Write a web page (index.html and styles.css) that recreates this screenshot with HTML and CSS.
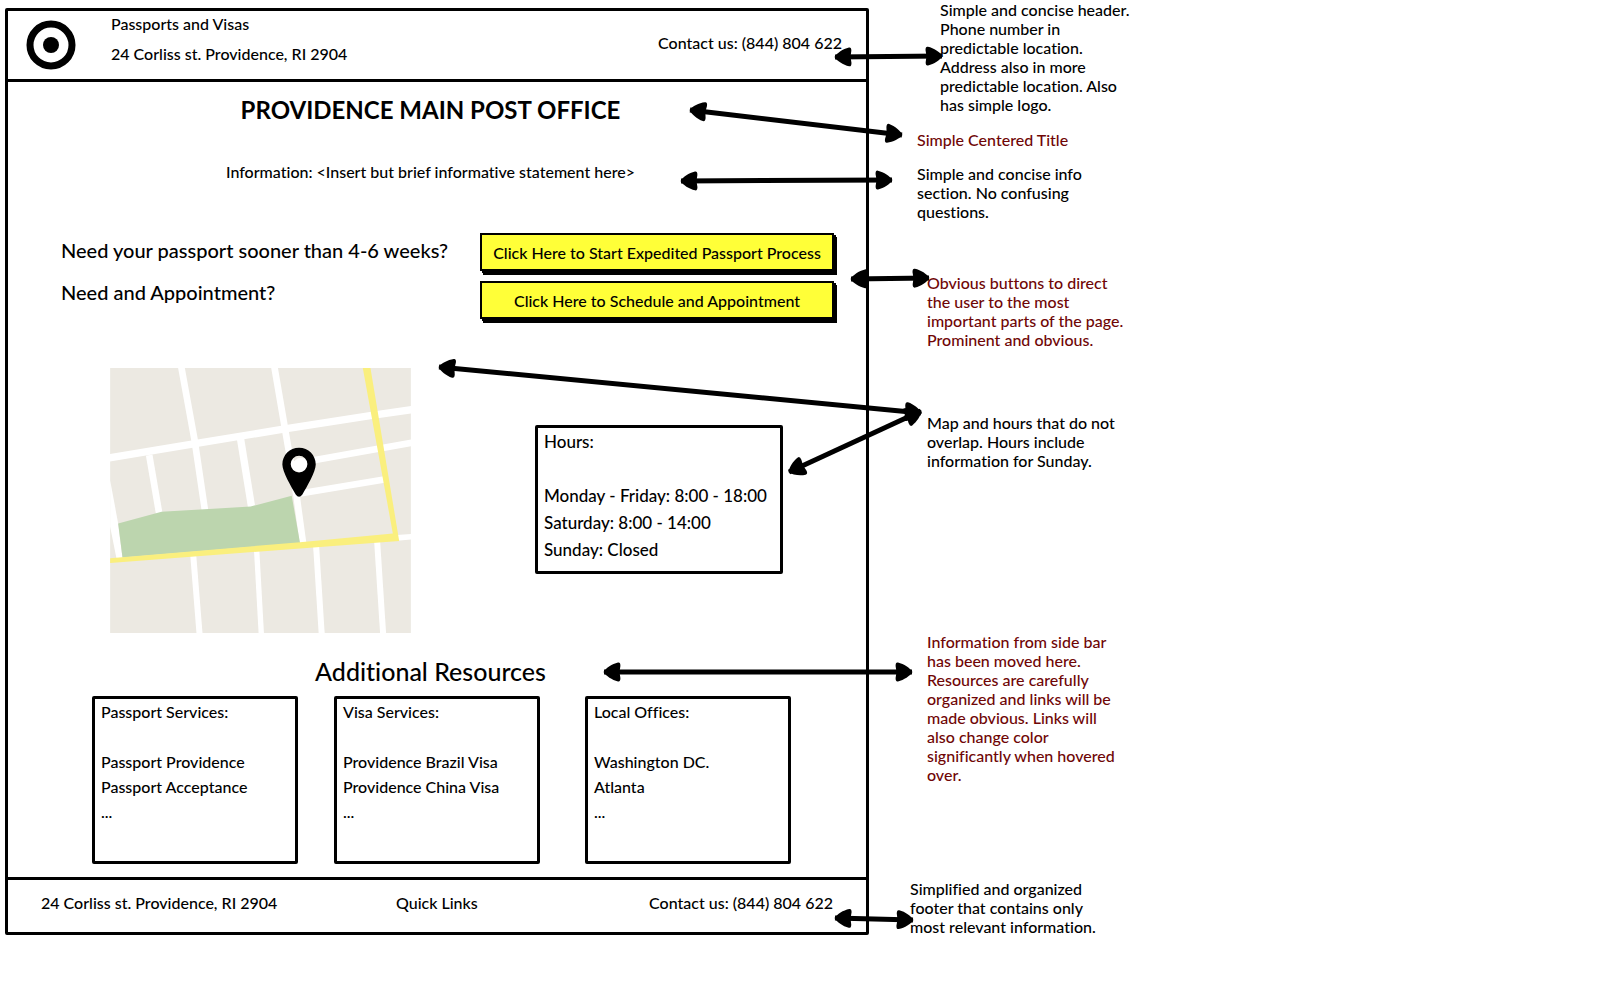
FILE: index.html
```html
<!DOCTYPE html>
<html lang="en">
<head>
<meta charset="utf-8">
<title>Providence Main Post Office</title>
<link rel="stylesheet" href="styles.css">
</head>
<body>
<div class="board">
  <div class="screen">
    <header class="header">
      <svg class="logo" viewBox="0 0 50 50" role="img" aria-label="Logo">
        <circle cx="25" cy="25" r="21" fill="none" stroke="#000" stroke-width="7"/>
        <circle cx="25" cy="25" r="8"/>
      </svg>
      <div class="identity">
        <div>Passports and Visas</div>
        <div>24 Corliss st. Providence, RI 2904</div>
      </div>
      <div class="header-contact">Contact us: (844) 804 622</div>
    </header>

    <main class="main">
      <h1 class="title">PROVIDENCE MAIN POST OFFICE</h1>
      <p class="info">Information: &lt;Insert but brief informative statement here&gt;</p>

      <section class="actions">
        <div class="questions">
          <p>Need your passport sooner than 4-6 weeks?</p>
          <p>Need and Appointment?</p>
        </div>
        <div class="buttons">
          <button class="button" type="button">Click Here to Start Expedited Passport Process</button>
          <button class="button" type="button">Click Here to Schedule and Appointment</button>
        </div>
      </section>

      <section class="visit">
        <svg class="map" viewBox="31 24 901 794" role="img" aria-label="Map">
          <rect x="31" y="24" width="901" height="794" fill="#ece9e2"/>
          <g fill="none" stroke="#fff" stroke-width="20">
            <path d="M25 294L290 250L550 207L820 165L940 148" stroke-width="22"/>
            <path d="M244 20L284 240L315 450"/>
            <path d="M523 20L553 195L590 410L609 550"/>
            <path d="M148 285L178 460"/>
            <path d="M421 232L455 442" stroke-width="22"/>
            <path d="M575 315L620 304L940 247"/>
            <path d="M595 401L852 358"/>
            <path d="M280 585L299 822" stroke-width="18"/>
            <path d="M470 570L484 822" stroke-width="16"/>
            <path d="M648 556L665 822" stroke-width="18"/>
            <path d="M831 544L849 822" stroke-width="18"/>
            <path d="M890 533L940 529" stroke-width="17"/>
          </g>
          <path d="M31 360L55 490L68 595L50 595L31 500Z" fill="#fff"/>
          <path d="M55 490L185 455L452 439L575 407L600 548L68 592Z" fill="#bcd5ae"/>
          <path d="M788 24H811L897 542L31 608V594L600 546L878 520Z" fill="#faef7e"/>
          <circle cx="602" cy="315" r="22" fill="#fff"/>
          <path fill-rule="evenodd" d="M547 313C547 285 569 263 597 263S647 285 647 313C647 335 620 380 607 403Q597 416 587 403C574 380 547 335 547 313ZM572 312A25 25 0 1 0 622 312A25 25 0 1 0 572 312Z"/>
        </svg>
        <div class="hours">
          <h2>Hours:</h2>
          <p>Monday - Friday: 8:00 - 18:00</p>
          <p>Saturday: 8:00 - 14:00</p>
          <p>Sunday: Closed</p>
        </div>
      </section>

      <h2 class="subtitle">Additional Resources</h2>
      <section class="resources">
        <div class="card">
          <h3>Passport Services:</h3>
          <a href="#">Passport Providence</a>
          <a href="#">Passport Acceptance</a>
          <span>...</span>
        </div>
        <div class="card">
          <h3>Visa Services:</h3>
          <a href="#">Providence Brazil Visa</a>
          <a href="#">Providence China Visa</a>
          <span>...</span>
        </div>
        <div class="card">
          <h3>Local Offices:</h3>
          <a href="#">Washington DC.</a>
          <a href="#">Atlanta</a>
          <span>...</span>
        </div>
      </section>
    </main>

    <footer class="footer">
      <div>24 Corliss st. Providence, RI 2904</div>
      <div>Quick Links</div>
      <div class="footer-contact">Contact us: (844) 804 622</div>
    </footer>
  </div>

  <aside class="notes">
    <p class="note note-header">Simple and concise header.<br>Phone number in<br>predictable location.<br>Address also in more<br>predictable location. Also<br>has simple logo.</p>
    <p class="note note-title">Simple Centered Title</p>
    <p class="note note-info">Simple and concise info<br>section. No confusing<br>questions.</p>
    <p class="note note-buttons">Obvious buttons to direct<br>the user to the most<br>important parts of the page.<br>Prominent and obvious.</p>
    <p class="note note-map">Map and hours that do not<br>overlap. Hours include<br>information for Sunday.</p>
    <p class="note note-resources">Information from side bar<br>has been moved here.<br>Resources are carefully<br>organized and links will be<br>made obvious. Links will<br>also change color<br>significantly when hovered<br>over.</p>
    <p class="note note-footer">Simplified and organized<br>footer that contains only<br>most relevant information.</p>
  </aside>

  <svg class="arrows" viewBox="0 0 1598 992" preserveAspectRatio="none" aria-hidden="true">
    <defs>
      <marker id="head" markerUnits="userSpaceOnUse" markerWidth="18" markerHeight="20" refX="17" refY="10" orient="auto-start-reverse">
        <path d="M17.500 10C15 6 9 2 3 0.600Q0.500 0 0.600 4L1.500 10L0.600 16Q0.500 20 3 19.400C9 18 15 14 17.500 10Z"/>
      </marker>
    </defs>
    <g class="arrow-lines">
      <path d="M835 57L942 56"/>
      <path d="M690 110L902 135"/>
      <path d="M681 181L892 180"/>
      <path d="M851 279L929 278"/>
      <path d="M439 367L921 413"/>
      <path d="M789 472L921 411"/>
      <path d="M604 672L912 672"/>
      <path d="M835 918L913 920"/>
    </g>
  </svg>
</div>
</body>
</html>
```
FILE: styles.css
```css
* {
  box-sizing: border-box;
}

body {
  margin: 0;
  background: #fff;
  color: #000;
  font-family: Lato, "Liberation Sans", sans-serif;
  font-size: 16px;
  font-weight: 500;
  font-variant-ligatures: none;
}

h1, h2, h3, p {
  margin: 0;
  font-size: inherit;
  font-weight: inherit;
}

.board {
  position: relative;
  display: grid;
  grid-template-columns: 32fr 27fr;
  align-items: start;
  padding-left: 5px;
  min-height: 992px;
}

.screen {
  margin-top: 8px;
  border: 3px solid #000;
  border-radius: 2px;
}

.header {
  display: flex;
  align-items: flex-start;
  padding: 0 24px 8px 18px;
  border-bottom: 3px solid #000;
}

.logo {
  width: 50px;
  height: 50px;
  margin-top: 9px;
}

.identity {
  display: grid;
  gap: 4px;
  margin-left: 35px;
  padding-bottom: 4px;
  line-height: 26px;
}

.header-contact {
  margin: 19px 0 0 auto;
  line-height: 26px;
}

.main {
  padding-right: 13px;
}

.title {
  padding-top: 12px;
  font-size: 24px;
  font-weight: 700;
  line-height: 32px;
  text-align: center;
}

.info {
  padding-top: 33px;
  line-height: 26px;
  text-align: center;
}

.actions {
  display: flex;
  justify-content: space-between;
  padding: 48px 19px 0 53px;
}

.questions {
  display: grid;
  align-content: start;
  gap: 16px;
  padding-top: 4px;
  font-size: 20px;
  line-height: 26px;
}

.buttons {
  display: grid;
  gap: 10px;
  width: 354px;
}

.button {
  height: 38px;
  padding: 0;
  border: 2px solid #000;
  background: #ffff38;
  box-shadow: 2px 2px 0 #000, 3px 4px 0 #000;
  color: #000;
  font: inherit;
  font-variant-ligatures: none;
}

.visit {
  display: flex;
  justify-content: space-between;
  align-items: flex-start;
  padding: 49px 70px 0 102px;
}

.map {
  width: 301px;
  height: 265px;
}

.hours {
  width: 248px;
  margin-top: 57px;
  padding: 0 6px 8px;
  border: 3px solid #000;
  border-radius: 2px;
  font-size: 17px;
  line-height: 27px;
}

.hours h2 {
  margin-bottom: 27px;
}

.subtitle {
  padding-top: 22px;
  font-size: 25px;
  line-height: 32px;
  text-align: center;
}

.resources {
  display: flex;
  gap: 36px;
  padding: 9px 62px 13px 84px;
}

.card {
  display: flex;
  flex-direction: column;
  width: 206px;
  padding: 0 6px 37px;
  border: 3px solid #000;
  border-radius: 2px;
  line-height: 25px;
}

.card:last-child {
  margin-left: auto;
}

.card h3 {
  margin-bottom: 25px;
}

.card a {
  color: inherit;
  text-decoration: none;
}

.card a:hover {
  color: #0645ad;
}

.footer {
  display: grid;
  grid-template-columns: 355px auto auto;
  padding: 10px 33px 16px;
  border-top: 3px solid #000;
  line-height: 26px;
}

.footer-contact {
  text-align: right;
}

.note {
  margin-left: 58px;
  line-height: 19px;
}

.note-header {
  margin-left: 71px;
}

.note-title {
  margin: 16px 0 0 48px;
  color: #6f0606;
}

.note-info {
  margin: 15px 0 0 48px;
}

.note-buttons {
  margin-top: 52px;
  color: #6f0606;
}

.note-map {
  margin-top: 64px;
}

.note-resources {
  margin-top: 162px;
  color: #6f0606;
}

.note-footer {
  margin: 95px 0 0 41px;
}

.arrows {
  position: absolute;
  inset: 0;
  width: 100%;
  height: 100%;
  pointer-events: none;
}

.arrow-lines path {
  fill: none;
  stroke: #000;
  stroke-width: 5px;
  marker-start: url(#head);
  marker-end: url(#head);
}
```
